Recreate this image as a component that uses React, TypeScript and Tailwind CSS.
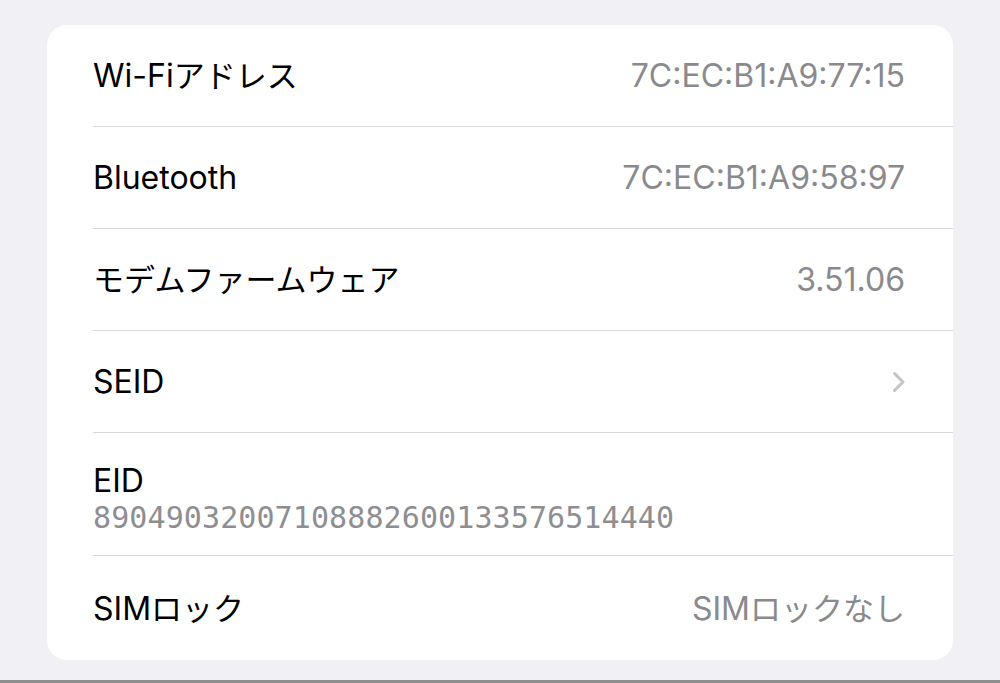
import React from "react";

const font = { fontFamily: 'Inter, "Noto Sans CJK JP", sans-serif' };

function Mixed({ text }: { text: string }) {
  const parts = text.match(/[\u3000-\u30ff\u4e00-\u9fff]+|[^\u3000-\u30ff\u4e00-\u9fff]+/g) || [];
  return (
    <>
      {parts.map((p, i) =>
        /[\u3000-\u30ff\u4e00-\u9fff]/.test(p) ? (
          <span key={i} className="text-[31px]">{p}</span>
        ) : (
          <span key={i} className="text-[32px]">{p}</span>
        )
      )}
    </>
  );
}

function Chevron() {
  return (
    <svg width="16" height="22" viewBox="0 0 16 22" fill="none">
      <path d="M3.5 2.5 L12 11 L3.5 19.5" stroke="#c4c4c7" strokeWidth="3" strokeLinecap="round" strokeLinejoin="round" />
    </svg>
  );
}

function Row({ label, value, chevron, last }: { label: string; value?: string; chevron?: boolean; last?: boolean }) {
  return (
    <div className={`flex items-center justify-between ml-[46px] pr-[48px] ${last ? "h-[104px]" : "h-[102px] border-b border-[#d8d8dc]"}`}>
      <span className="leading-[40px] pt-[6px] text-black"><Mixed text={label} /></span>
      {value && <span className="leading-[40px] pt-[6px] text-[#8a8a8e]"><Mixed text={value} /></span>}
      {chevron && <span className="mr-[-2px]"><Chevron /></span>}
    </div>
  );
}

export default function App() {
  return (
    <div className="h-[683px] w-[1000px] bg-[#f0f0f5] border-b-[3px] border-[#8e8e8e] pt-[25px] px-[47px]" style={font}>
      <div className="w-[906px] h-[635px] bg-white rounded-[20px] overflow-hidden">
        <Row label="Wi-Fiアドレス" value="7C:EC:B1:A9:77:15" />
        <Row label="Bluetooth" value="7C:EC:B1:A9:58:97" />
        <Row label="モデムファームウェア" value="3.51.06" />
        <Row label="SEID" chevron />
        <div className="ml-[46px] pr-[48px] h-[123px] border-b border-[#d8d8dc] pt-[28px]">
          <div className="text-[32px] leading-[40px] text-black">EID</div>
          <div className="text-[30px] leading-[34px] text-[#8e8e92] tracking-[0.1px]" style={{ fontFamily: '"DejaVu Sans Mono", monospace' }}>89049032007108882600133576514440</div>
        </div>
        <Row label="SIMロック" value="SIMロックなし" last />
      </div>
    </div>
  );
}
